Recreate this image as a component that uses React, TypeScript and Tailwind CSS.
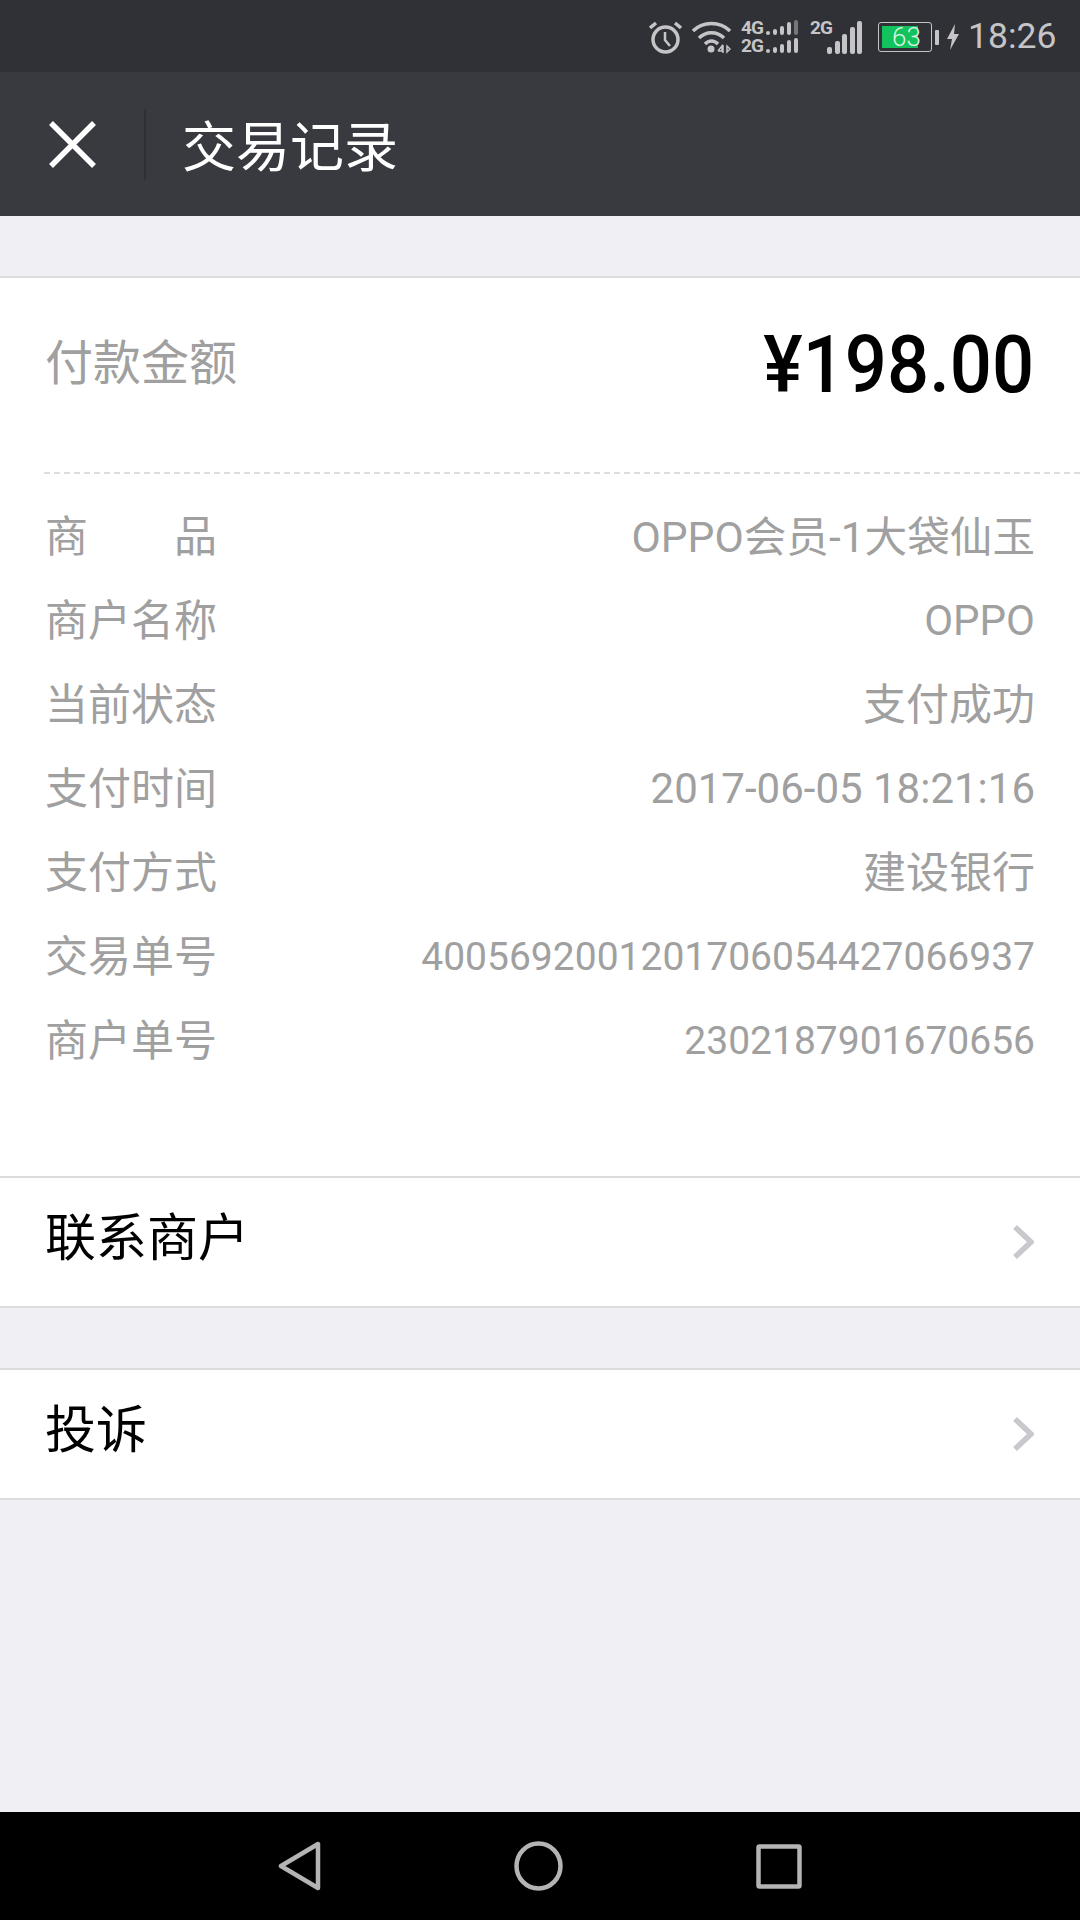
const FONT_STACK = "font-['Roboto','Noto_Sans_CJK_SC',sans-serif]";

const DETAIL_ROWS = [
  { label: "商户名称", value: "OPPO", valueClass: "text-[42px]" },
  { label: "当前状态", value: "支付成功", valueClass: "text-[43px]" },
  { label: "支付时间", value: "2017-06-05 18:21:16", valueClass: "text-[42px]" },
  { label: "支付方式", value: "建设银行", valueClass: "text-[43px]" },
  { label: "交易单号", value: "4005692001201706054427066937", valueClass: "text-[39px]" },
  { label: "商户单号", value: "2302187901670656", valueClass: "text-[39px]" },
];

function SignalBars({
  heights,
  barWidth = 4,
  gap = 3,
  dimLast = false,
}: {
  heights: number[];
  barWidth?: number;
  gap?: number;
  dimLast?: boolean;
}) {
  return (
    <div className="flex items-end" style={{ gap }}>
      {heights.map((height, index) => (
        <span
          key={index}
          className="rounded-[2px]"
          style={{
            width: barWidth,
            height,
            backgroundColor: dimLast && index === heights.length - 1 ? "#77787b" : "#c5c5c7",
          }}
        />
      ))}
    </div>
  );
}

function StatusBar() {
  return (
    <div className={`flex h-[72px] items-center justify-end bg-[#303136] pr-[25px] pt-[2px] text-[#c5c5c7] ${FONT_STACK}`}>
      <svg viewBox="0 0 33 33" className="h-[33px] w-[33px]" fill="none" stroke="#c5c5c7" strokeWidth="3.5">
        <circle cx="16.5" cy="18.5" r="12.5" />
        <path d="M16 11v8l5 6" strokeWidth="2.5" />
        <path d="M1 7l6-5M32 7l-6-5" />
      </svg>
      <svg viewBox="0 0 39 33" className="ml-[10px] h-[33px] w-[39px]" fill="none" stroke="#c5c5c7" strokeWidth="3.5">
        <path d="M1 10C11 0 28 0 38 10" />
        <path d="M7 17c7-7 18-7 25 0" />
        <path d="M13 23c4-4 9-4 13 0" />
        <circle cx="19" cy="28" r="3.5" fill="#c5c5c7" stroke="none" />
        <path d="M26 30l4-5v5h-4M31 32v-8M35 25v6l3-3z" strokeWidth="1.5" />
      </svg>
      <div className="ml-[10px] flex w-[57px] justify-between">
        <span className="text-[19px] font-bold leading-[18px] tracking-[-1px]">
          4G
          <br />
          2G
        </span>
        <div className="flex flex-col gap-[3px] pt-[1px]">
          <SignalBars heights={[4, 6, 9, 13, 15]} dimLast />
          <SignalBars heights={[4, 6, 9, 13, 15]} />
        </div>
      </div>
      <div className="relative ml-[12px] h-[34px] w-[52px]">
        <span className="absolute left-0 top-0 text-[19px] font-bold leading-[16px] tracking-[-1px]">2G</span>
        <div className="absolute bottom-0 right-0">
          <SignalBars heights={[7, 13, 20, 27, 33]} barWidth={5} gap={2.5} />
        </div>
      </div>
      <div className="ml-[16px] flex items-center">
        <div className="flex h-[30px] w-[54px] items-stretch rounded-[3px] border-[1.5px] border-[#c5c5c7] p-[3px]">
          <div className="relative w-[36px] bg-[#12c25c]">
            <span className="absolute left-[10px] top-[-4px] text-[26px] font-light leading-[30px] text-[#d8f5e2]">
              63
            </span>
          </div>
        </div>
        <span className="ml-[3px] h-[15px] w-[4px] rounded-[1px] bg-[#c5c5c7]" />
      </div>
      <svg viewBox="0 0 12 26" className="ml-[8px] h-[26px] w-[12px]" fill="#c5c5c7">
        <path d="M8 0L0 15h5l-2 11 9-16H7z" />
      </svg>
      <span className="ml-[9px] w-[87px] text-right text-[35.5px] font-normal leading-none">18:26</span>
    </div>
  );
}

function Header() {
  return (
    <div className="flex h-[144px] items-center bg-[#393a3f]">
      <svg viewBox="0 0 47 47" className="ml-[49px] h-[47px] w-[47px]" stroke="#ffffff" strokeWidth="5.5">
        <path d="M2 2l43 43M45 2L2 45" />
      </svg>
      <span className="ml-[48px] h-[71px] w-[2px] bg-[#2f3035]" />
      <h1 className="ml-[36px] text-[54px] leading-none text-white font-['Noto_Sans_CJK_SC',sans-serif]">
        交易记录
      </h1>
    </div>
  );
}

function Chevron() {
  return (
    <svg viewBox="0 0 21 34" className="h-[34px] w-[21px]" fill="none" stroke="#c8c8cd" strokeWidth="5.5">
      <path d="M2 2l16 15L2 32" />
    </svg>
  );
}

function LinkRow({ label, borderTop }: { label: string; borderTop?: boolean }) {
  return (
    <div
      className={`flex h-[132px] items-center justify-between border-b-2 border-[#dcdcdf] bg-white pl-[45px] pr-[46px] ${
        borderTop ? "border-t-2" : ""
      }`}
    >
      <span className="-mt-[15px] text-[51px] leading-none text-black font-['Noto_Sans_CJK_SC',sans-serif]">{label}</span>
      <Chevron />
    </div>
  );
}

export default function App() {
  return (
    <div className={`flex h-[1920px] w-[1080px] flex-col overflow-hidden bg-[#efeff4] ${FONT_STACK}`}>
      <StatusBar />
      <Header />

      <div className="mt-[60px] border-t-2 border-[#dcdcdf] bg-white">
        <div className="flex h-[194px] items-center justify-between pb-[24px] pl-[45px] pr-[46px]">
          <span className="-mt-[8px] text-[48px] leading-none text-[#a0a0a0] font-['Noto_Sans_CJK_SC',sans-serif]">付款金额</span>
          <span className="mt-[3px] origin-right scale-x-[0.927] text-[80px] font-medium leading-none text-black">¥198.00</span>
        </div>
        <div className="ml-[44px] border-t-2 border-dashed border-[#dddddd]" />

        <div className="flex flex-col pb-[97px] pl-[45px] pr-[45px] pt-[17px] leading-none text-[#a0a0a0]">
          <div className="flex h-[84px] items-center justify-between">
            <span className="flex w-[172px] justify-between text-[43px] font-['Noto_Sans_CJK_SC',sans-serif]">
              <span>商</span>
              <span>品</span>
            </span>
            <span className="mt-[8px] text-[42.6px]">OPPO会员-1大袋仙玉</span>
          </div>
          {DETAIL_ROWS.map((row) => (
            <div key={row.label} className="flex h-[84px] items-center justify-between">
              <span className="text-[43px] font-['Noto_Sans_CJK_SC',sans-serif]">{row.label}</span>
              <span className={`mt-[8px] ${row.valueClass}`}>{row.value}</span>
            </div>
          ))}
        </div>
      </div>

      <LinkRow label="联系商户" borderTop />
      <div className="mt-[60px]">
        <LinkRow label="投诉" borderTop />
      </div>

      <div className="flex-1" />

      <div className="flex h-[108px] items-center justify-center gap-[193px] bg-black">
        <svg viewBox="0 0 43 50" className="h-[50px] w-[43px]" fill="none" stroke="#b4b4b4" strokeWidth="4.5" strokeLinejoin="round">
          <path d="M40 3v44L3 25z" />
        </svg>
        <svg viewBox="0 0 49 50" className="h-[50px] w-[49px]" fill="none" stroke="#b4b4b4" strokeWidth="4.5">
          <ellipse cx="24.5" cy="25" rx="22" ry="22.5" />
        </svg>
        <svg viewBox="0 0 46 45" className="h-[45px] w-[46px]" fill="none" stroke="#b4b4b4" strokeWidth="4.5" strokeLinejoin="round">
          <rect x="2.5" y="2.5" width="41" height="40" rx="1" />
        </svg>
      </div>
    </div>
  );
}
